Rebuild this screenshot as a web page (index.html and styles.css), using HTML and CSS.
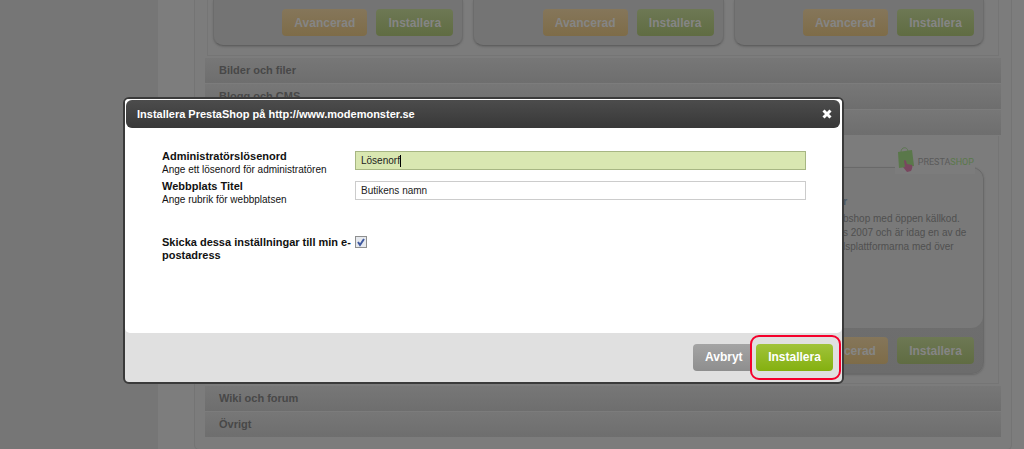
FILE: index.html
```html
<!DOCTYPE html>
<html lang="sv">
<head>
    <meta charset="utf-8">
    <title>Installera PrestaShop</title>
    <link rel="stylesheet" href="styles.css">
</head>
<body>
    <div class="page">
        <div class="content">
            <div class="panel">
                <!-- Category with three apps -->
                <div class="category apps">
                    <div class="card">
                        <button class="btn orange">Avancerad</button>
                        <button class="btn green">Installera</button>
                    </div>
                    <div class="card">
                        <button class="btn orange">Avancerad</button>
                        <button class="btn green">Installera</button>
                    </div>
                    <div class="card">
                        <button class="btn orange">Avancerad</button>
                        <button class="btn green">Installera</button>
                    </div>
                </div>

                <div class="bar">Bilder och filer</div>
                <div class="bar">Blogg och CMS</div>
                <div class="bar"></div>

                <!-- Open category -->
                <div class="category shop">
                    <div class="product">
                        <div class="logo">
                            <svg width="20" height="28" viewBox="0 0 20 28">
                                <path d="M5 6 C5 1 11 0 12 5" fill="none" stroke="#5e7752" stroke-width="1"/>
                                <path d="M2 6 L16 4 L18 20 L3 22 Z" fill="#5a784a"/>
                                <path d="M8 15 Q9 13 10 15 L11 18 L16 19 Q17 21 15 25 L11 26 L7 21 L9 21 Z" fill="#79475f"/>
                            </svg>
                            <span class="logo-text">PRESTA<b>SHOP</b></span>
                        </div>
                        <div class="product-body">
                            <a href="#" class="product-link">r</a>
                            <p>bshop med öppen källkod.<br>s 2007 och är idag en av de<br>lsplattformarna med över</p>
                        </div>
                        <div class="product-footer">
                            <button class="btn orange">Avancerad</button>
                            <button class="btn green">Installera</button>
                        </div>
                    </div>
                </div>

                <div class="bar">Wiki och forum</div>
                <div class="bar">Övrigt</div>
            </div>
        </div>
    </div>

    <!-- Install dialog -->
    <form class="dialog" role="dialog" aria-labelledby="dialogTitle">
        <div class="dialog-header">
            <span id="dialogTitle">Installera PrestaShop på http://www.modemonster.se</span>
            <button type="button" class="close" aria-label="Stäng">
                <svg width="10" height="10" viewBox="0 0 10 10">
                    <path d="M1.5 1.5 L8.5 8.5 M8.5 1.5 L1.5 8.5" stroke="#fff" stroke-width="3"/>
                </svg>
            </button>
        </div>
        <div class="dialog-body">
            <div class="field">
                <div class="field-text">
                    <label for="password">Administratörslösenord</label>
                    <small>Ange ett lösenord för administratören</small>
                </div>
                <div class="input-wrap">
                    <input type="text" id="password" class="active" value="Lösenorf">
                    <span class="caret"></span>
                </div>
            </div>
            <div class="field">
                <div class="field-text">
                    <label for="siteTitle">Webbplats Titel</label>
                    <small>Ange rubrik för webbplatsen</small>
                </div>
                <div class="input-wrap">
                    <input type="text" id="siteTitle" value="Butikens namn">
                </div>
            </div>
            <div class="field mail">
                <div class="field-text">
                    <label for="sendMail">Skicka dessa inställningar till min e-postadress</label>
                </div>
                <input type="checkbox" id="sendMail" checked>
            </div>
        </div>
        <div class="dialog-footer">
            <button type="button" class="btn cancel">Avbryt</button>
            <div class="highlight">
                <button type="button" class="btn install">Installera</button>
            </div>
        </div>
    </form>
</body>
</html>
```

FILE: styles.css
```css
* {
    box-sizing: border-box;
}

html, body {
    margin: 0;
    padding: 0;
}

body {
    position: relative;
    min-height: 100vh;
    background: #767676;
    font-family: "Liberation Sans", Arial, sans-serif;
    font-size: 11px;
    overflow: hidden;
}

button, input {
    font-family: inherit;
}

.page {
    padding-left: 158px;
}

.content {
    padding: 0 12px 0 36px;
    background: #7d7d7d;
}

.panel {
    padding: 0 10px 11px;
    background: #7c7c7c;
    border: 1px solid #747474;
    border-top: 0;
    border-radius: 0 0 5px 5px;
}

.category {
    margin: 0 2px;
    border: 1px solid #757575;
    border-top: 0;
}

.apps {
    display: grid;
    grid-template-columns: repeat(3, 1fr);
    gap: 10px;
    padding: 0 14px 9px 5px;
    margin-bottom: 2px;
}

.card {
    display: flex;
    justify-content: flex-end;
    align-items: flex-start;
    gap: 9px;
    height: 46px;
    padding: 9px 9px 0;
    background: #747474;
    border: 1px solid #6c6c6c;
    border-top: 0;
    border-bottom-color: #606060;
    border-radius: 0 0 10px 10px;
    box-shadow: 0 1px 2px #696969;
}

.btn {
    height: 27px;
    padding: 0 12px;
    border: 0;
    border-radius: 4px;
    color: #858585;
    font-size: 12px;
    font-weight: bold;
}

.orange {
    background: linear-gradient(#85765a, #7e6c48);
    width: 85px;
}

.green {
    background: linear-gradient(#6d7854, #606c42);
    width: 77px;
}

.bar {
    height: 25px;
    margin-bottom: 1px;
    padding: 0 14px;
    background: linear-gradient(#777777, #6e6e6e);
    color: #484848;
    font-weight: bold;
    line-height: 25px;
}

.shop {
    padding: 31px 14px 9px 5px;
    margin-bottom: 2px;
}

.product {
    position: relative;
    background: linear-gradient(#747474, #6c6c6c);
    border: 1px solid #696969;
    border-radius: 12px;
    box-shadow: 0 1px 2px #666666;
}

.logo {
    position: absolute;
    top: -22px;
    right: 8px;
    display: flex;
    align-items: center;
    gap: 2px;
    padding: 0 1px;
    background: #7c7c7c;
}

.logo-text {
    padding-top: 4px;
    color: #5a5a5a;
    font-family: "Liberation Sans Narrow", Roboto, sans-serif;
    font-size: 9px;
}

.logo-text b {
    color: #5a784a;
    font-weight: normal;
}

.product-body {
    display: flex;
    flex-direction: column;
    align-items: flex-end;
    height: 160px;
    padding: 26px 20px 0 0;
    background: #797979;
    border-radius: 12px;
    color: #505050;
}

.product-body p {
    width: 120px;
    margin: 4px 0 0;
    font-size: 10px;
    line-height: 14px;
    white-space: nowrap;
}

.product-link {
    width: 120px;
    color: #4c5864;
    font-weight: bold;
    line-height: 14px;
    text-decoration: none;
}

.product-footer {
    display: flex;
    justify-content: flex-end;
    gap: 9px;
    padding: 9px;
}

.dialog {
    position: absolute;
    top: 97px;
    left: 123px;
    right: 180px;
    border: 2px solid #3a3a3a;
    border-radius: 6px;
    background: #e0e0e0;
    overflow: hidden;
}

.dialog-header {
    display: flex;
    justify-content: space-between;
    align-items: center;
    height: 28px;
    margin: 1px 2px 1px 1px;
    padding: 0 8px 0 11px;
    background: linear-gradient(#4c4c4c, #383838);
    border-radius: 6px;
    box-shadow: 0 0 0 7px #fff;
    color: #fff;
    font-weight: bold;
}

.close {
    display: flex;
    padding: 0;
    border: 0;
    background: none;
}

.dialog-body {
    position: relative;
    height: 204px;
    padding: 21px 36px 0 37px;
    background: #fff;
    border-radius: 0 0 5px 5px;
}

.field {
    display: flex;
    align-items: flex-start;
    height: 30px;
}

.field-text {
    flex: none;
    width: 193px;
    color: #111;
}

.field-text label {
    display: block;
    font-weight: bold;
    line-height: 13px;
}

.field-text small {
    display: block;
    font-size: 10px;
    line-height: 13px;
    white-space: nowrap;
}

.input-wrap {
    position: relative;
    flex: 1;
}

.input-wrap input {
    display: block;
    width: 100%;
    height: 19px;
    margin-top: 1px;
    padding: 0 5px;
    border: 1px solid #ccc;
    background: #fff;
    color: #222;
    font-size: 10px;
}

.input-wrap .active {
    border-color: #a7b683;
    background: #d9e7b1;
}

.caret {
    position: absolute;
    top: 5px;
    left: 45px;
    width: 1px;
    height: 12px;
    background: #000;
}

.mail {
    margin-top: 26px;
}

.mail input {
    appearance: none;
    width: 12px;
    height: 12px;
    margin: 0;
    border: 1px solid #8e8f8f;
    background: #e6e9ee url('data:image/svg+xml,<svg xmlns="http://www.w3.org/2000/svg" viewBox="0 0 10 10"><path d="M2 5 L4 8 L8 2" fill="none" stroke="%23405aa0" stroke-width="2"/></svg>') center no-repeat;
}

.dialog-footer {
    display: flex;
    align-items: center;
    justify-content: flex-end;
    height: 49px;
    padding: 0 1px 1px 0;
}

.cancel {
    width: 61px;
    background: linear-gradient(#a4a4a4, #8e8e8e);
    color: #fff;
}

.highlight {
    position: relative;
    margin-left: -4px;
    padding: 7px 6px 7px 4px;
    background: #e0e0e0;
    border: 2px solid #f5002b;
    border-radius: 9px;
}

.install {
    display: block;
    width: 77px;
    background: linear-gradient(#a0c33a, #84b010);
    color: #fff;
}
```
